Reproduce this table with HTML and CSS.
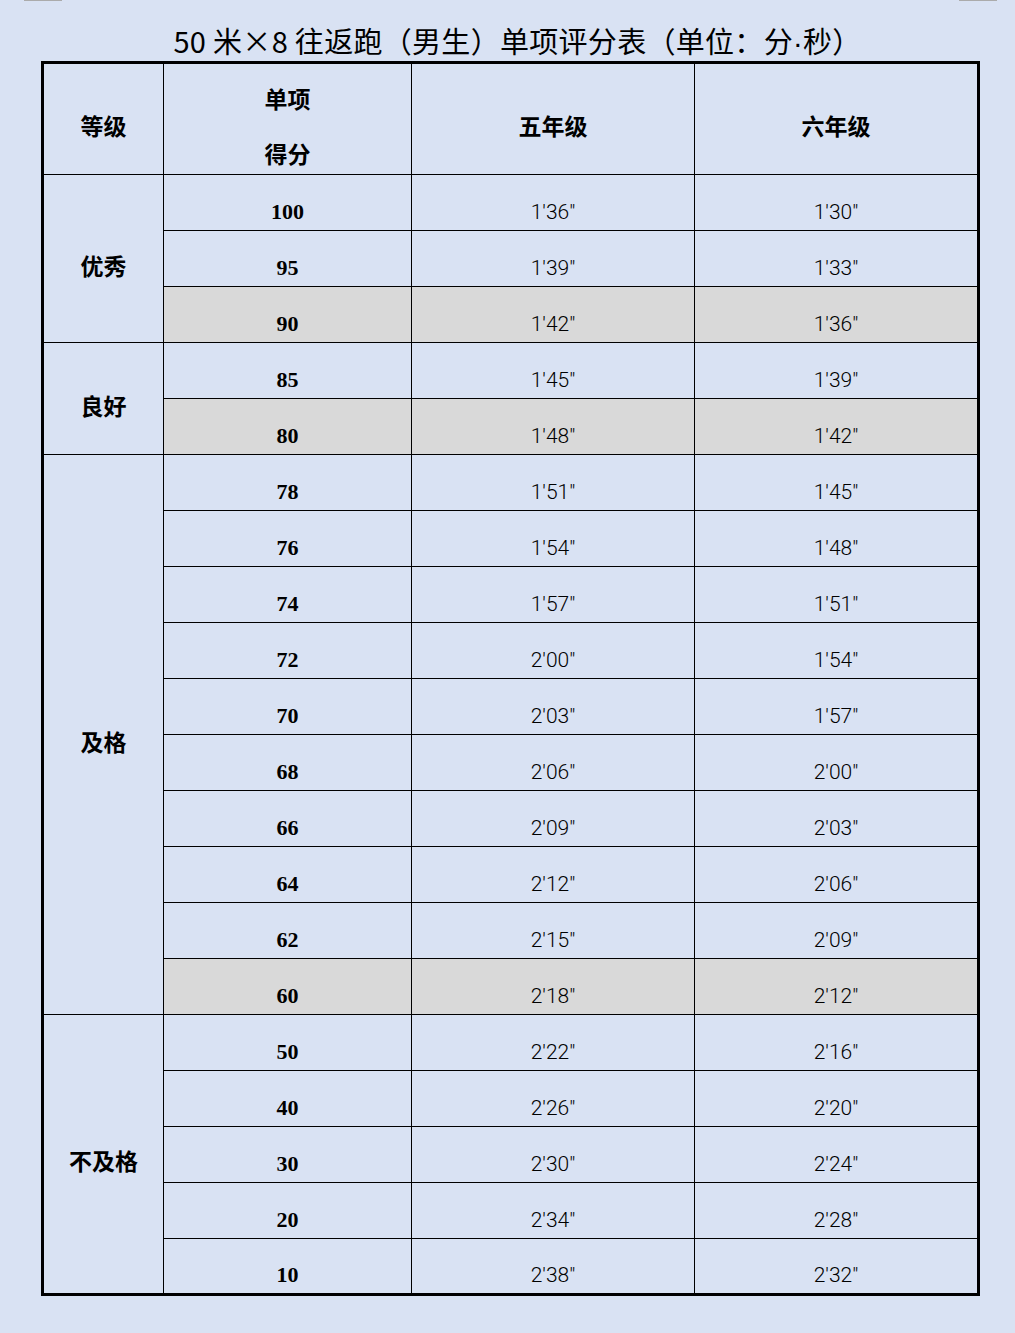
FILE: index.html
```html
<!DOCTYPE html>
<html lang="zh-CN">
<head>
<meta charset="utf-8">
<title>50米×8往返跑（男生）单项评分表</title>
<link rel="stylesheet" href="styles.css">
</head>
<body>
<div class="page">
  <div class="marks"><span class="mark"></span><span class="mark"></span></div>
  <h1 class="title">50 米×8 往返跑（男生）单项评分表（单位：分<span class="dot">·</span>秒）</h1>
  <table class="score">
    <thead>
      <tr class="head-row">
        <th class="c1">等级</th>
        <th class="c2"><div class="stack"><span>单项</span><span>得分</span></div></th>
        <th class="c3">五年级</th>
        <th class="c4 last-col">六年级</th>
      </tr>
    </thead>
    <tbody>
      <tr><td class="grade" rowspan="3">优秀</td><td class="pts">100</td><td class="time">1'36"</td><td class="time last-col">1'30"</td></tr>
      <tr><td class="pts">95</td><td class="time">1'39"</td><td class="time last-col">1'33"</td></tr>
      <tr class="shade"><td class="pts">90</td><td class="time">1'42"</td><td class="time last-col">1'36"</td></tr>

      <tr><td class="grade" rowspan="2">良好</td><td class="pts">85</td><td class="time">1'45"</td><td class="time last-col">1'39"</td></tr>
      <tr class="shade"><td class="pts">80</td><td class="time">1'48"</td><td class="time last-col">1'42"</td></tr>

      <tr><td class="grade" rowspan="10">及格</td><td class="pts">78</td><td class="time">1'51"</td><td class="time last-col">1'45"</td></tr>
      <tr><td class="pts">76</td><td class="time">1'54"</td><td class="time last-col">1'48"</td></tr>
      <tr><td class="pts">74</td><td class="time">1'57"</td><td class="time last-col">1'51"</td></tr>
      <tr><td class="pts">72</td><td class="time">2'00"</td><td class="time last-col">1'54"</td></tr>
      <tr><td class="pts">70</td><td class="time">2'03"</td><td class="time last-col">1'57"</td></tr>
      <tr><td class="pts">68</td><td class="time">2'06"</td><td class="time last-col">2'00"</td></tr>
      <tr><td class="pts">66</td><td class="time">2'09"</td><td class="time last-col">2'03"</td></tr>
      <tr><td class="pts">64</td><td class="time">2'12"</td><td class="time last-col">2'06"</td></tr>
      <tr><td class="pts">62</td><td class="time">2'15"</td><td class="time last-col">2'09"</td></tr>
      <tr class="shade"><td class="pts">60</td><td class="time">2'18"</td><td class="time last-col">2'12"</td></tr>

      <tr><td class="grade last-row" rowspan="5">不及格</td><td class="pts">50</td><td class="time">2'22"</td><td class="time last-col">2'16"</td></tr>
      <tr><td class="pts">40</td><td class="time">2'26"</td><td class="time last-col">2'20"</td></tr>
      <tr><td class="pts">30</td><td class="time">2'30"</td><td class="time last-col">2'24"</td></tr>
      <tr><td class="pts">20</td><td class="time">2'34"</td><td class="time last-col">2'28"</td></tr>
      <tr class="final"><td class="pts last-row">10</td><td class="time last-row">2'38"</td><td class="time last-col last-row">2'32"</td></tr>
    </tbody>
  </table>
</div>
</body>
</html>
```

FILE: styles.css
```css
* { box-sizing: border-box; }

html, body {
  margin: 0;
  padding: 0;
  background: #d9e2f3;
}

.page {
  width: 1015px;
  height: 1333px;
  background: #d9e2f3;
  color: #000;
}

.marks {
  display: flex;
  justify-content: space-between;
  height: 1px;
  padding: 0 18px 0 24px;
}

.mark {
  display: block;
  width: 38px;
  height: 1px;
  background: #ababab;
}

.title {
  margin: 0 0 3px 41px;
  width: 939px;
  height: 57px;
  overflow: visible;
  padding: 21px 0 0 14px;
  line-height: 36px;
  text-align: center;
  font-family: "Noto Sans CJK SC", "Noto Sans", sans-serif;
  font-weight: 400;
  font-size: 29px;
  letter-spacing: 0.3px;
}

.title .dot {
  font-family: "Liberation Sans", sans-serif;
  line-height: 1;
}

.score {
  margin-left: 41px;
  width: 939px;
  table-layout: fixed;
  border-collapse: separate;
  border-spacing: 0;
  border: 3px solid #000;
}

.score th,
.score td {
  border-right: 1px solid #000;
  border-bottom: 1px solid #000;
  padding: 18px 0 0 0;
  vertical-align: middle;
  text-align: center;
  line-height: 24px;
}

.score th,
.score td.grade {
  padding-top: 12px;
}

.score .last-col { border-right: none; }
.score .last-row { border-bottom: none; }

.c1 { width: 120px; }
.c2 { width: 248px; }
.c3 { width: 283px; }
.c4 { width: 282px; }

.head-row { height: 111px; }
.score tbody tr { height: 56px; }
.score tbody tr.final { height: 54px; }

.score th,
.grade {
  font-family: "Noto Sans CJK SC", sans-serif;
  font-weight: 700;
  font-size: 23px;
}

.stack {
  display: flex;
  flex-direction: column;
  align-items: center;
  gap: 31px;
}

.pts {
  font-family: "Liberation Serif", serif;
  font-weight: 700;
  font-size: 22px;
}

.time {
  font-family: Roboto, "Liberation Sans", sans-serif;
  font-weight: 300;
  font-size: 21px;
}

.shade td { background: #d9d9d9; }
```
